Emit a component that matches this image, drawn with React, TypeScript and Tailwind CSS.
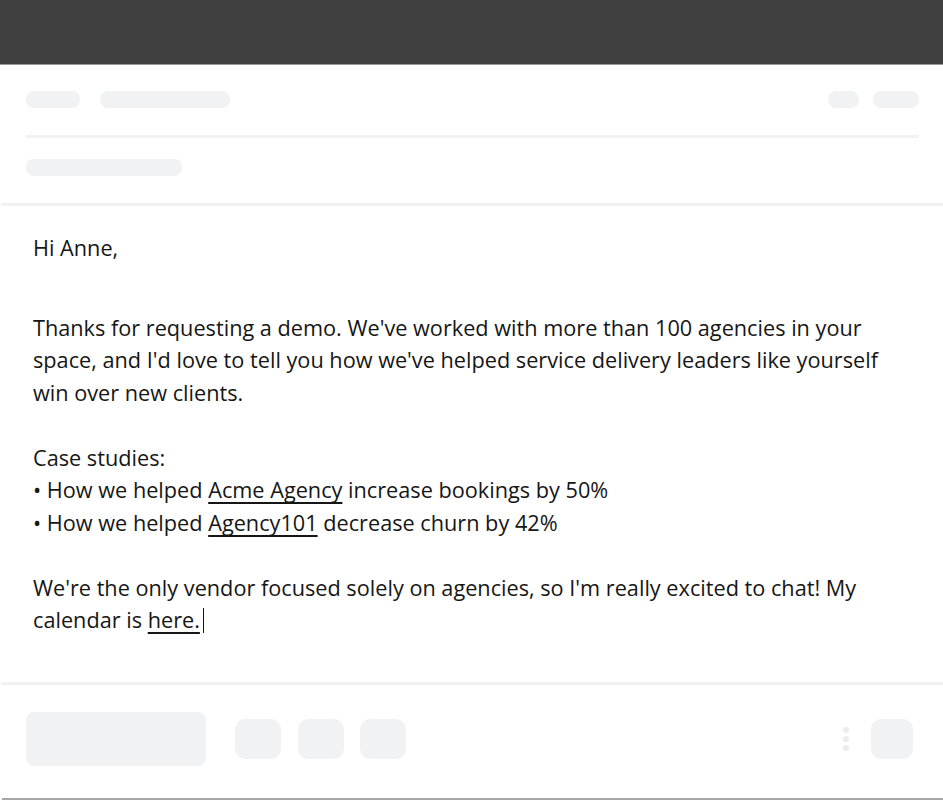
export default function App() {
  return (
    <div className="w-[943px] h-[800px] bg-white flex flex-col overflow-hidden" style={{ fontFamily: '"Open Sans", "Noto Sans", sans-serif' }}>
      {/* Top window bar */}
      <div className="h-[65px] bg-[#404040] border-b border-[#9a9a9a] shrink-0" />

      {/* Header skeleton */}
      <div className="px-[24px] pt-[26px] pb-[27px] border-b-[3px] border-[#f2f2f3] ml-[2px]">
        <div className="flex items-center h-[17px]">
          <div className="w-[54px] h-[17px] rounded-lg bg-[#f1f2f4]" />
          <div className="w-[130px] h-[17px] rounded-lg bg-[#f1f2f4] ml-[20px]" />
          <div className="flex-1" />
          <div className="w-[31px] h-[17px] rounded-lg bg-[#f1f2f4]" />
          <div className="w-[46px] h-[17px] rounded-lg bg-[#f1f2f4] ml-[14px]" />
        </div>
        <div className="h-[3px] bg-[#f2f2f3] mt-[27px]" />
        <div className="w-[156px] h-[17px] rounded-lg bg-[#f1f2f4] mt-[21px]" />
      </div>

      {/* Email body */}
      <div className="flex-1 pl-[33px] pr-[40px] pt-[26px] text-[21.7px] leading-[32.5px] text-[#161616]">
        <p>Hi Anne,</p>
        <p className="mt-[47px]">
          Thanks for requesting a demo. We've worked with more than 100 agencies in your space, and I'd love to tell you how we've helped service delivery leaders like yourself win over new clients.
        </p>
        <p className="mt-[32.5px]">Case studies:</p>
        <p>• How we helped <span className="underline underline-offset-[4px] [text-decoration-skip-ink:none]">Acme Agency</span> increase bookings by 50%</p>
        <p>• How we helped <span className="underline underline-offset-[4px] [text-decoration-skip-ink:none]">Agency101</span> decrease churn by 42%</p>
        <p className="mt-[32.5px]">
          We're the only vendor focused solely on agencies, so I'm really excited to chat! My calendar is{' '}
          <span className="underline underline-offset-[4px] [text-decoration-skip-ink:none]">here.</span>
          <i className="inline-block w-[1.5px] h-[25px] bg-[#111] align-[-5px] ml-[3px]" />
        </p>
      </div>

      {/* Footer skeleton */}
      <div className="h-[118px] shrink-0 border-t-[3px] border-[#f2f2f3] ml-[2px] border-b-2 border-b-[#a8a8a8] flex items-center pl-[24px] pr-[30px] pb-[5px]">
        <div className="w-[180px] h-[54px] rounded-lg bg-[#f1f2f4]" />
        <div className="w-[46px] h-[40px] rounded-[10px] bg-[#f1f2f4] ml-[29px]" />
        <div className="w-[46px] h-[40px] rounded-[10px] bg-[#f1f2f4] ml-[17px]" />
        <div className="w-[46px] h-[40px] rounded-[10px] bg-[#f1f2f4] ml-[16px]" />
        <div className="flex-1" />
        <div className="flex flex-col gap-[3px]">
          <div className="w-[6px] h-[6px] rounded-full bg-[#ececee]" />
          <div className="w-[6px] h-[6px] rounded-full bg-[#ececee]" />
          <div className="w-[6px] h-[6px] rounded-full bg-[#ececee]" />
        </div>
        <div className="w-[42px] h-[40px] rounded-[10px] bg-[#f1f2f4] ml-[22px]" />
      </div>
    </div>
  );
}
